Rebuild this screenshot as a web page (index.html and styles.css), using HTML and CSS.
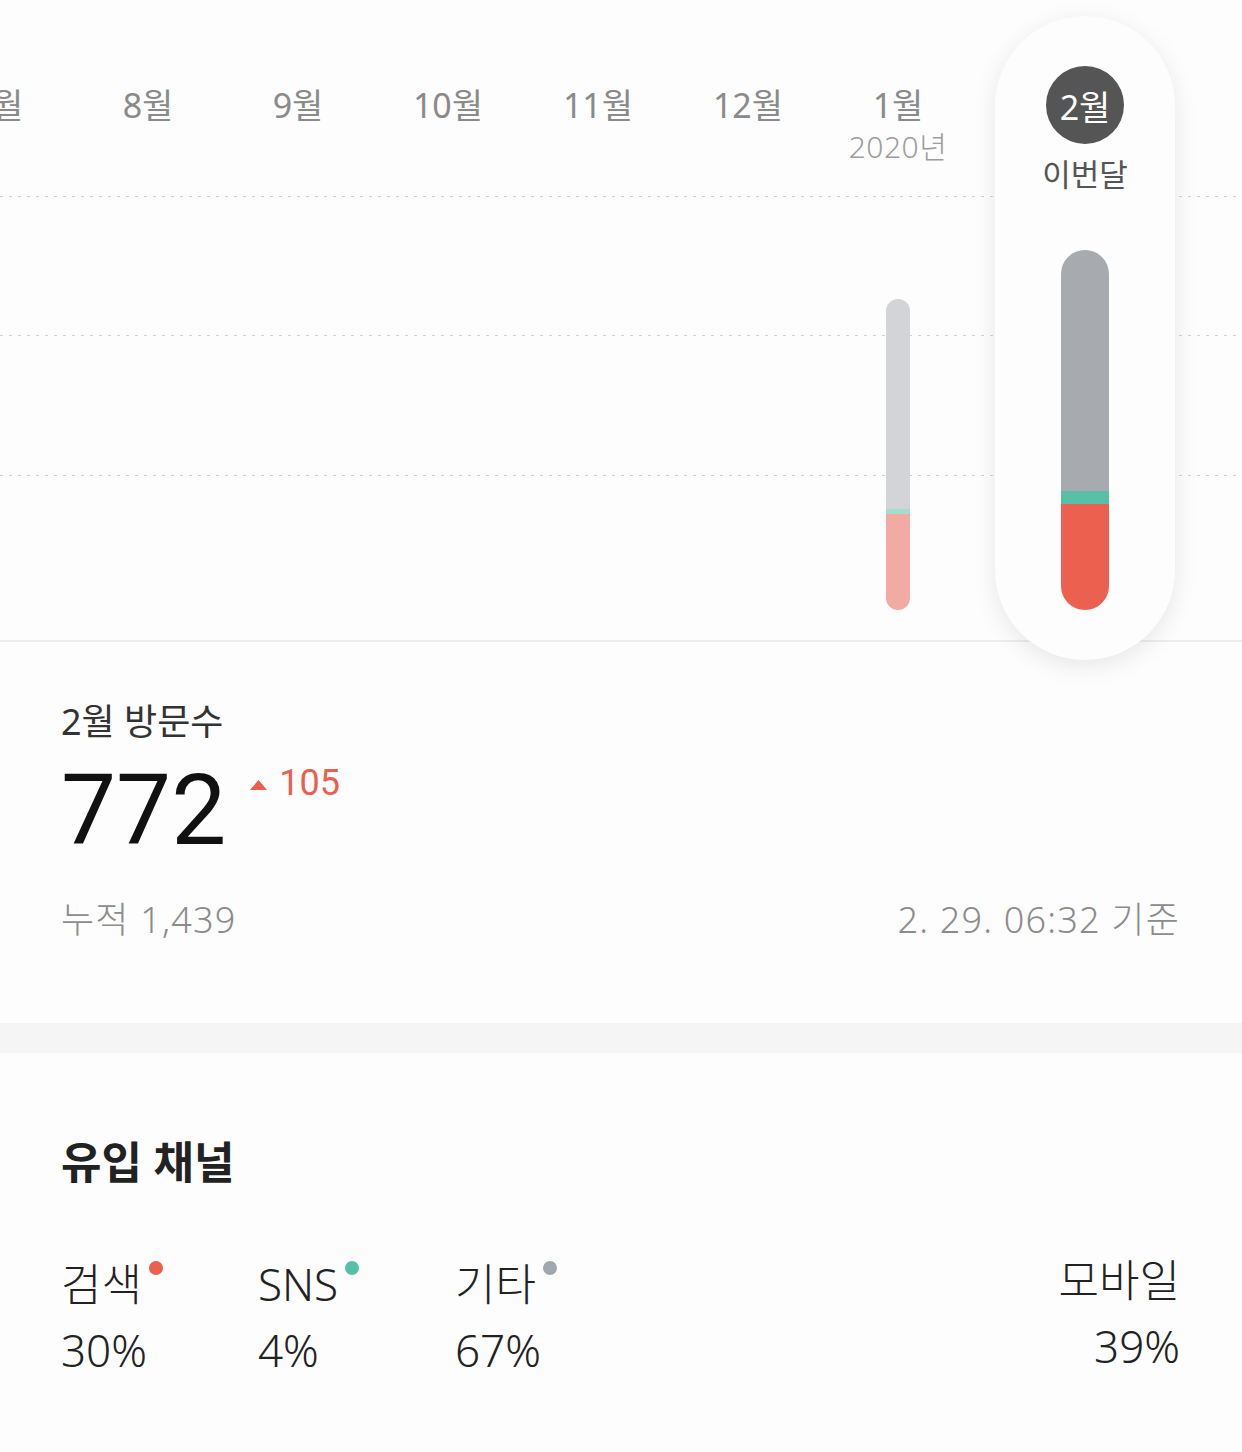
FILE: index.html
```html
<!DOCTYPE html>
<html lang="ko">
<head>
    <meta charset="UTF-8">
    <meta name="viewport" content="width=device-width, initial-scale=1.0">
    <title>방문 통계</title>
    <link rel="stylesheet" href="styles.css">
</head>
<body>
    <!-- 월별 방문수 차트 -->
    <div class="chart">
        <div class="months">
            <div class="month"><span class="month-label">7월</span></div>
            <div class="month"><span class="month-label">8월</span></div>
            <div class="month"><span class="month-label">9월</span></div>
            <div class="month"><span class="month-label">10월</span></div>
            <div class="month"><span class="month-label">11월</span></div>
            <div class="month"><span class="month-label">12월</span></div>
            <div class="month">
                <span class="month-label">1월</span>
                <span class="month-year">2020년</span>
                <div class="bar bar-past">
                    <div class="seg seg-etc" style="height:210px"></div>
                    <div class="seg seg-sns" style="height:5px"></div>
                    <div class="seg seg-search" style="height:96px"></div>
                </div>
            </div>
            <div class="month-current">
                <span class="month-badge">2월</span>
                <span class="month-now">이번달</span>
                <div class="bar bar-current">
                    <div class="seg seg-etc" style="height:241px"></div>
                    <div class="seg seg-sns" style="height:13px"></div>
                    <div class="seg seg-search" style="height:106px"></div>
                </div>
            </div>
        </div>
    </div>

    <!-- 이번달 요약 -->
    <div class="summary">
        <div class="summary-title">2월 방문수</div>
        <div class="summary-count">
            <span class="count-num">772</span>
            <span class="count-diff">
                <svg width="17" height="10" viewBox="0 0 17 10"><polygon points="8.5,0 17,10 0,10" fill="#e9604e"/></svg>
                <span>105</span>
            </span>
        </div>
        <div class="summary-foot">
            <span>누적 1,439</span>
            <span>2. 29. 06:32 기준</span>
        </div>
    </div>

    <div class="divider"></div>

    <!-- 유입 채널 -->
    <div class="channels">
        <h2 class="channels-title">유입 채널</h2>
        <div class="channel-row">
            <div class="channel">
                <div class="channel-name">검색<i class="dot dot-search"></i></div>
                <div class="channel-value">30%</div>
            </div>
            <div class="channel">
                <div class="channel-name">SNS<i class="dot dot-sns"></i></div>
                <div class="channel-value">4%</div>
            </div>
            <div class="channel">
                <div class="channel-name">기타<i class="dot dot-etc"></i></div>
                <div class="channel-value">67%</div>
            </div>
            <div class="channel channel-device">
                <div class="channel-name">모바일</div>
                <div class="channel-value">39%</div>
            </div>
        </div>
    </div>
</body>
</html>
```

FILE: styles.css
```css
body {
    margin: 0;
    background: #fdfdfd;
    font-family: "Noto Sans", "Noto Sans CJK KR", sans-serif;
    color: #222;
}

/* 차트 영역 */
.chart {
    height: 640px;
    border-bottom: 2px solid #ececec;
    background-image:
        linear-gradient(to right, #cfcfcf 3px, transparent 3px),
        linear-gradient(to right, #cfcfcf 3px, transparent 3px),
        linear-gradient(to right, #cfcfcf 3px, transparent 3px);
    background-size: 9px 1px;
    background-repeat: repeat-x;
    background-position: 0 196px, 0 335px, 0 475px;
}
.months {
    display: flex;
    height: 100%;
    margin-left: -77px;
}
.month {
    width: 150px;
    flex: none;
    display: flex;
    flex-direction: column;
    align-items: center;
    padding: 85px 0 30px;
    box-sizing: border-box;
}
.month-label {
    font-size: 34px;
    line-height: 1.2;
    color: #8a8a8a;
}
.month-year {
    margin-top: 3px;
    font-size: 30px;
    line-height: 1.2;
    font-weight: 300;
    color: #9d9d9d;
    letter-spacing: 0.5px;
}
.month-current {
    position: relative;
    z-index: 1;
    flex: none;
    width: 180px;
    height: 644px;
    margin: 16px 0 0 22px;
    padding: 50px 0;
    box-sizing: border-box;
    border-radius: 90px;
    background: #fdfdfd;
    box-shadow: 0 6px 24px rgba(0, 0, 0, 0.09);
    display: flex;
    flex-direction: column;
    align-items: center;
}
.month-badge {
    width: 78px;
    height: 78px;
    border-radius: 50%;
    background: #555;
    color: #fff;
    font-size: 34px;
    display: flex;
    align-items: center;
    justify-content: center;
}
.month-now {
    margin-top: 12px;
    font-size: 31px;
    line-height: 1.2;
    color: #555;
}

/* 막대 */
.bar {
    margin-top: auto;
    display: flex;
    flex-direction: column;
    overflow: hidden;
}
.bar-past {
    width: 24px;
    border-radius: 12px;
}
.bar-current {
    width: 48px;
    border-radius: 24px;
}
.bar-past .seg-etc { background: #d2d4d7; }
.bar-past .seg-sns { background: #a3ddd0; }
.bar-past .seg-search { background: #f2aba2; }
.bar-current .seg-etc { background: #a7aaae; }
.bar-current .seg-sns { background: #57c1a8; }
.bar-current .seg-search { background: #eb604e; }

/* 요약 */
.summary {
    padding: 58px 62px 82px 61px;
}
.summary-title {
    font-size: 36px;
    line-height: 1.2;
    color: #333;
}
.summary-count {
    display: flex;
    align-items: flex-start;
    margin-top: 19px;
}
.count-num {
    font-family: Roboto, "Noto Sans CJK KR", sans-serif;
    font-size: 98px;
    line-height: 1;
    color: #111;
}
.count-diff {
    display: flex;
    align-items: center;
    gap: 12px;
    margin: 3px 0 0 24px;
    font-family: Roboto, "Noto Sans CJK KR", sans-serif;
    font-size: 36px;
    line-height: 1;
    color: #e9604e;
}
.count-diff svg {
    margin-top: 4px;
}
.summary-foot {
    display: flex;
    justify-content: space-between;
    margin-top: 38px;
    font-size: 36px;
    line-height: 1.2;
    font-weight: 300;
    letter-spacing: 1.2px;
    color: #8c8c8c;
}

.divider {
    height: 30px;
    background: #f5f5f5;
}

/* 유입 채널 */
.channels {
    padding: 83px 62px 40px 61px;
}
.channels-title {
    margin: 0;
    font-size: 44px;
    line-height: 1.2;
    font-weight: 700;
    color: #222;
}
.channel-row {
    display: flex;
    margin-top: 62px;
}
.channel {
    width: 197px;
    font-size: 44px;
    line-height: 66px;
    font-weight: 300;
    color: #222;
}
.channel-name {
    display: flex;
    align-items: flex-start;
}
.channel-device {
    margin-left: auto;
    width: auto;
    text-align: right;
    margin-top: -4px;
}
.channel-device .channel-name {
    justify-content: flex-end;
}
.dot {
    width: 14px;
    height: 14px;
    margin: 10px 0 0 7px;
    border-radius: 50%;
}
.dot-search { background: #eb604e; }
.dot-sns { background: #57c1a8; }
.dot-etc { background: #a2a6ae; }
```
